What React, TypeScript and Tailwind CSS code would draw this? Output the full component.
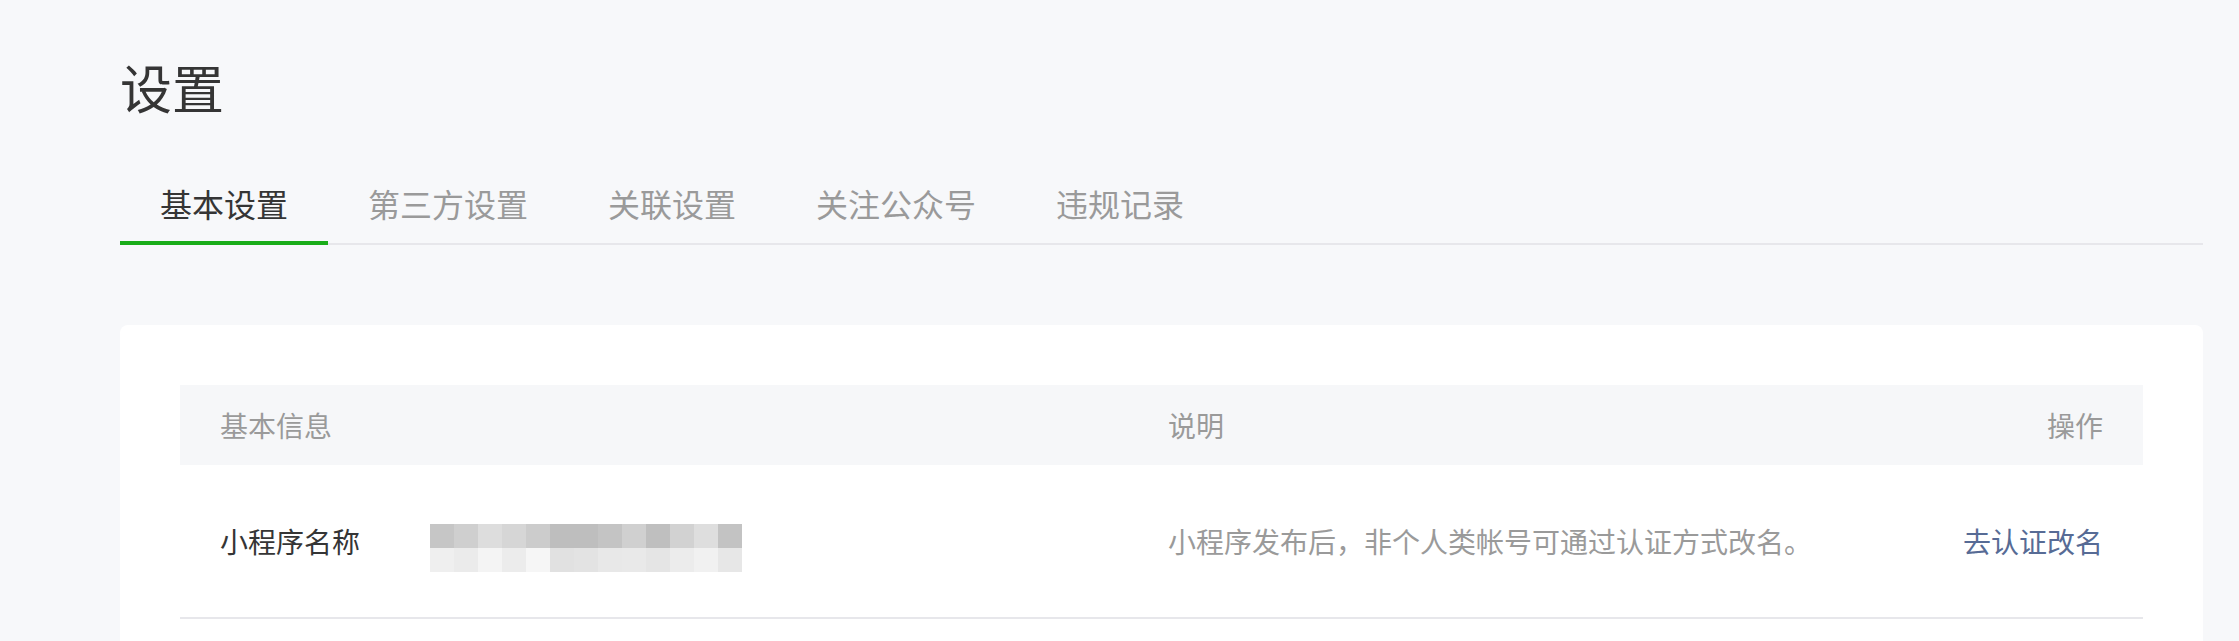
import React from 'react';

const tabs = ['基本设置', '第三方设置', '关联设置', '关注公众号', '违规记录'];

// pixelated placeholder for the hidden mini-program name
const mosaicTop = ['#c6c6c6', '#cfcfcf', '#dddddd', '#d6d6d6', '#cccccc', '#bebebe', '#bebebe', '#c4c4c4', '#d0d0d0', '#bfbfbf', '#d2d2d2', '#dedede', '#c3c3c3'];
const mosaicBottom = ['#efefef', '#ebebeb', '#f4f4f4', '#ececec', '#f6f6f6', '#e1e1e1', '#e3e3e3', '#e8e8e8', '#e9e9e9', '#e5e5e5', '#ececec', '#f1f1f1', '#e7e7e7'];

function Mosaic() {
  return (
    <div className="flex flex-col mt-[14px]">
      <div className="flex">
        {mosaicTop.map((c, i) => (
          <div key={i} className="w-6 h-6" style={{ backgroundColor: c }} />
        ))}
      </div>
      <div className="flex">
        {mosaicBottom.map((c, i) => (
          <div key={i} className="w-6 h-6" style={{ backgroundColor: c }} />
        ))}
      </div>
    </div>
  );
}

export default function App() {
  return (
    <div
      className="min-h-screen w-full bg-[#f7f8fa] pl-[120px] pr-[36px] pt-[61px]"
      style={{ fontFamily: '"Noto Sans CJK SC", "Noto Sans", sans-serif' }}
    >
      {/* Page title */}
      <h1 className="text-[52px] leading-[52px] text-[#353535] font-normal mb-[74px]">设置</h1>

      {/* Tabs */}
      <nav className="flex border-b-2 border-[#e7e7eb]">
        {tabs.map((t, i) => (
          <div
            key={t}
            className={
              i === 0
                ? 'px-10 pb-[22px] text-[32px] leading-8 -mb-[2px] border-b-4 border-[#1aad19] text-[#353535]'
                : 'px-10 pb-[22px] text-[32px] leading-8 -mb-[2px] border-b-4 border-transparent text-[#9a9a9a]'
            }
          >
            {t}
          </div>
        ))}
      </nav>

      {/* Basic info card */}
      <section className="mt-[80px] bg-white rounded-lg px-[60px] pt-[60px] pb-[40px]">
        <div className="grid grid-cols-[948px_1fr_auto] items-center h-[80px] bg-[#f6f7f9] px-10 text-[28px] leading-8 text-[#9a9a9a]">
          <span>基本信息</span>
          <span>说明</span>
          <span className="text-right">操作</span>
        </div>

        <div className="grid grid-cols-[948px_1fr_auto] items-center h-[154px] border-b-2 border-[#e7e7eb] px-10 text-[28px] leading-8">
          <div className="flex items-center">
            <span className="w-[210px] text-[#353535]">小程序名称</span>
            <Mosaic />
          </div>
          <span className="text-[#9a9a9a]">小程序发布后，非个人类帐号可通过认证方式改名。</span>
          <a className="text-[#576b95] text-right cursor-pointer">去认证改名</a>
        </div>
      </section>
    </div>
  );
}
